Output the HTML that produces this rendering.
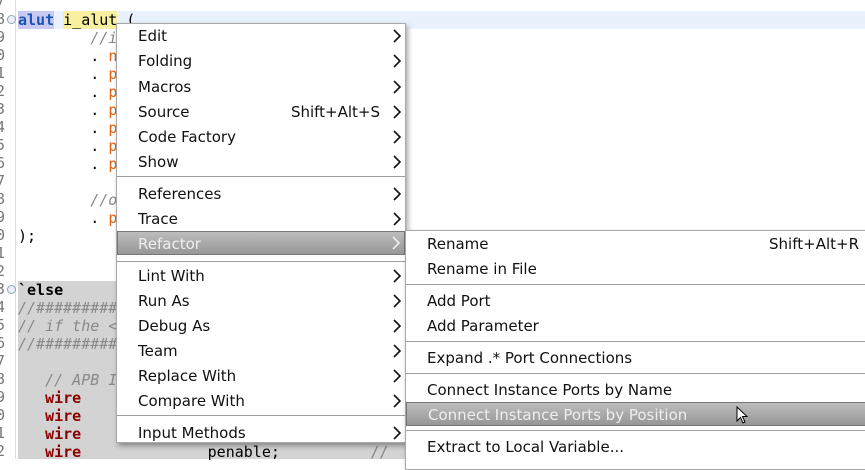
<!DOCTYPE html>
<html><head><style>
*{margin:0;padding:0;box-sizing:border-box}
body{width:865px;height:459px;overflow:hidden;background:#fff;position:relative;font-family:"DejaVu Sans Mono","Liberation Mono",monospace}
.ln{position:absolute;left:-4px;width:12px;font-size:15px;color:#777;line-height:18px}
.code{position:absolute;left:18px;font-size:15px;line-height:18px;white-space:pre;color:#000}
.gut{position:absolute;left:15px;top:0;width:1px;height:459px;background:#ddd}
.menu{position:absolute;background:#fff;border:1px solid #a8a8a8;box-shadow:2px 3px 5px rgba(0,0,0,.35);font-family:"DejaVu Sans","Liberation Sans",sans-serif;font-size:15px;color:#111}
.it{position:absolute;left:0;right:0;height:24px;line-height:24px;padding-left:21px}
.it .ar{position:absolute;right:4px;top:5px;width:8px;height:14px}
.it .sc{position:absolute;right:4px;top:0}
.sep{position:absolute;left:0;right:0;height:1px;background:#a0a0a0}
.hl{background:linear-gradient(#bdbdbd,#979797);border:1px solid #777;color:#eee}
</style></head><body>
<svg width="0" height="0" style="position:absolute"><defs><symbol id="a" viewBox="0 0 8 14"><path d="M1 1 L7 7 L1 13" fill="none" stroke="currentColor" stroke-width="1.6"/></symbol></defs></svg>
<div style="position:absolute;left:18px;top:11px;width:847px;height:18px;background:#e8f1fc"></div>
<div style="position:absolute;left:18px;top:281px;width:400px;height:178px;background:#d3d3d3"></div>
<div class="gut"></div>
<div class="ln" style="top:-8px">7<br>8<br>9<br>0<br>1<br>2<br>3<br>4<br>5<br>6<br>7<br>8<br>9<br>0<br>1<br>2<br>3<br>4<br>5<br>6<br>7<br>8<br>9<br>0<br>1<br>2</div>
<div style="position:absolute;left:7px;top:15px;width:9px;height:9px;border:1px solid #8aa;border-radius:50%;background:#eef"></div>
<div style="position:absolute;left:7px;top:285px;width:9px;height:9px;border:1px solid #8aa;border-radius:50%;background:#eef"></div>
<div class="code" style="top:11px"><span style="background:#c8c8f0;color:#1a55b0;font-weight:bold">alut</span> <span style="background:#f8f0a0">i_alut</span> (</div>
<div class="code" style="top:29px;color:#888;font-style:italic">        //i</div>
<div class="code" style="top:47px">        . <span style="color:#e06010">n</span></div>
<div class="code" style="top:65px">        . <span style="color:#e06010">p</span></div>
<div class="code" style="top:83px">        . <span style="color:#e06010">p</span></div>
<div class="code" style="top:101px">        . <span style="color:#e06010">p</span></div>
<div class="code" style="top:119px">        . <span style="color:#e06010">p</span></div>
<div class="code" style="top:137px">        . <span style="color:#e06010">p</span></div>
<div class="code" style="top:155px">        . <span style="color:#e06010">p</span></div>
<div class="code" style="top:191px;color:#888;font-style:italic">        //o</div>
<div class="code" style="top:209px">        . <span style="color:#e06010">p</span></div>
<div class="code" style="top:227px">);</div>
<div class="code" style="top:281px;font-weight:bold">`else</div>
<div class="code" style="top:299px;color:#888;font-style:italic">//##########</div>
<div class="code" style="top:317px;color:#888;font-style:italic">// if the &lt;</div>
<div class="code" style="top:335px;color:#888;font-style:italic">//##########</div>
<div class="code" style="top:371px;color:#888;font-style:italic">   // APB I</div>
<div class="code" style="top:389px;color:#8b0000;font-weight:bold">   wire</div>
<div class="code" style="top:407px;color:#8b0000;font-weight:bold">   wire</div>
<div class="code" style="top:425px;color:#8b0000;font-weight:bold">   wire</div>
<div class="code" style="top:443px"><span style="color:#8b0000;font-weight:bold">   wire</span>              penable;          <span style="color:#888">//</span></div>

<div class="menu" style="left:116px;top:23px;width:290px;height:420px">
<div class="it" style="top:0">Edit<svg class="ar"><use href="#a"/></svg></div>
<div class="it" style="top:25px">Folding<svg class="ar"><use href="#a"/></svg></div>
<div class="it" style="top:51px">Macros<svg class="ar"><use href="#a"/></svg></div>
<div class="it" style="top:76px">Source<span class="sc" style="right:25px">Shift+Alt+S</span><svg class="ar"><use href="#a"/></svg></div>
<div class="it" style="top:101px">Code Factory<svg class="ar"><use href="#a"/></svg></div>
<div class="it" style="top:126px">Show<svg class="ar"><use href="#a"/></svg></div>
<div class="sep" style="top:152px"></div>
<div class="it" style="top:158px">References<svg class="ar"><use href="#a"/></svg></div>
<div class="it" style="top:183px">Trace<svg class="ar"><use href="#a"/></svg></div>
<div class="it hl" style="top:207px;padding-left:20px">Refactor<svg class="ar" style="top:4px"><use href="#a"/></svg></div>
<div class="sep" style="top:237px"></div>
<div class="it" style="top:240px">Lint With<svg class="ar"><use href="#a"/></svg></div>
<div class="it" style="top:265px">Run As<svg class="ar"><use href="#a"/></svg></div>
<div class="it" style="top:290px">Debug As<svg class="ar"><use href="#a"/></svg></div>
<div class="it" style="top:315px">Team<svg class="ar"><use href="#a"/></svg></div>
<div class="it" style="top:340px">Replace With<svg class="ar"><use href="#a"/></svg></div>
<div class="it" style="top:365px">Compare With<svg class="ar"><use href="#a"/></svg></div>
<div class="sep" style="top:391px"></div>
<div class="it" style="top:397px">Input Methods<svg class="ar"><use href="#a"/></svg></div>
</div>

<div class="menu" style="left:405px;top:230px;width:470px;height:240px">
<div class="it" style="top:1px">Rename<span class="sc" style="right:15px">Shift+Alt+R</span></div>
<div class="it" style="top:26px">Rename in File</div>
<div class="sep" style="top:53px"></div>
<div class="it" style="top:58px">Add Port</div>
<div class="it" style="top:83px">Add Parameter</div>
<div class="sep" style="top:110px"></div>
<div class="it" style="top:115px">Expand .* Port Connections</div>
<div class="sep" style="top:142px"></div>
<div class="it" style="top:147px">Connect Instance Ports by Name</div>
<div class="it hl" style="top:171px;padding-left:21px">Connect Instance Ports by Position</div>
<div class="sep" style="top:199px"></div>
<div class="it" style="top:204px">Extract to Local Variable...</div>
</div>
<svg style="position:absolute;left:736px;top:406px" width="14" height="20" viewBox="0 0 14 20"><path d="M1 1 L1 15 L4.5 11.5 L7 17 L9 16 L6.5 10.5 L11 10.5 Z" fill="#fff" stroke="#000" stroke-width="1"/></svg>
</body></html>
